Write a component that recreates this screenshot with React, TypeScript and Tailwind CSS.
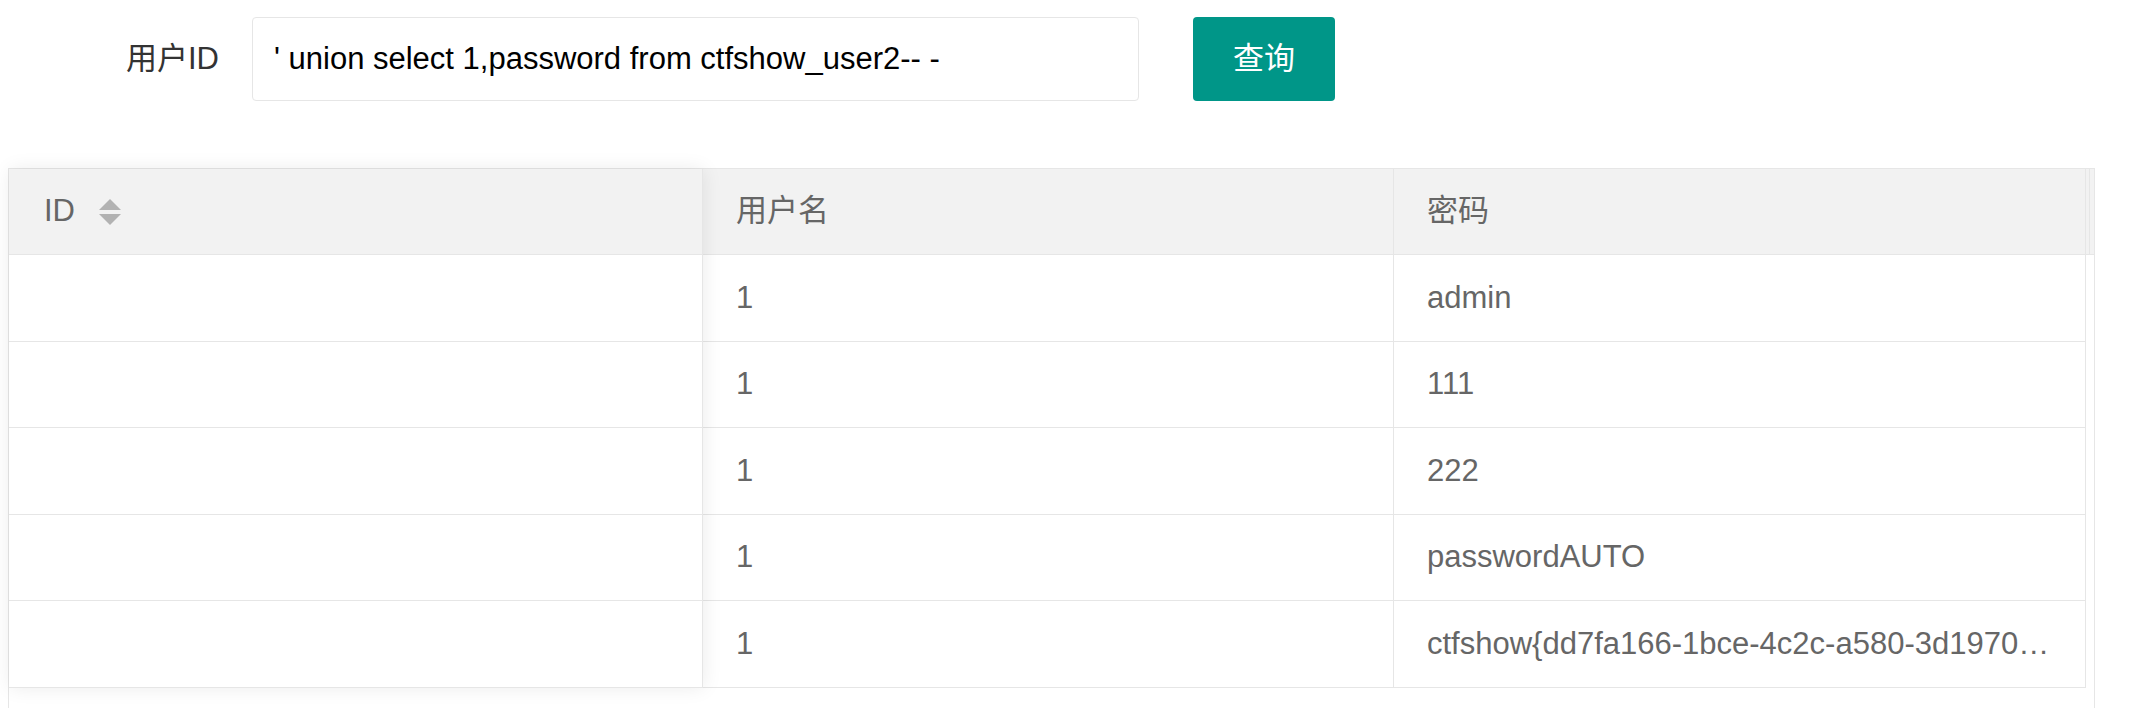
import type { ReactNode } from 'react';

const rows = [
  { name: '1', pass: 'admin' },
  { name: '1', pass: '111' },
  { name: '1', pass: '222' },
  { name: '1', pass: 'passwordAUTO' },
  { name: '1', pass: 'ctfshow{dd7fa166-1bce-4c2c-a580-3d1970…' },
];

function SortIcon() {
  return (
    <svg width="22" height="26" viewBox="0 0 22 26" className="ml-[24px] shrink-0">
      <polygon points="11,0 22,11 0,11" fill="#b2b2b2" />
      <polygon points="0,15 22,15 11,26" fill="#b2b2b2" />
    </svg>
  );
}

function Cell({ children, className = '' }: { children?: ReactNode; className?: string }) {
  return (
    <div className={`flex items-center px-[33px] overflow-hidden whitespace-nowrap ${className}`}>
      <span className="truncate">{children}</span>
    </div>
  );
}

export default function App() {
  return (
    <div
      className="min-h-screen bg-white pt-[17px] text-[31px]"
      style={{ fontFamily: '"Liberation Sans", Arial, "Noto Sans CJK SC", sans-serif' }}
    >
      {/* Search form */}
      <div className="flex items-center pl-[8px]">
        <label className="w-[244px] pr-[33px] text-right text-[#333]">用户ID</label>
        <div className="flex h-[84px] w-[887px] items-center rounded-[4px] border border-[#e6e6e6] bg-white pl-[21px] text-black">
          ' union select 1,password from ctfshow_user2-- -
        </div>
        <button className="ml-[54px] h-[84px] w-[142px] rounded-[4px] bg-[#009688] text-white">查询</button>
      </div>

      {/* Table */}
      <div className="ml-[8px] mt-[67px] w-[2087px] border-x border-t border-[#e6e6e6] text-[#666]">
        <div className="flex">
          {/* fixed left column */}
          <div className="relative z-10 w-[694px] shrink-0 border-r border-[#e6e6e6] bg-white shadow-[1px_0_18px_rgba(0,0,0,0.08)]">
            <div className="flex h-[86px] items-center border-b border-[#e6e6e6] bg-[#f2f2f2] px-[35px]">
              <span>ID</span>
              <SortIcon />
            </div>
            {rows.map((_, i) => (
              <div key={i} className="h-[86.5px] border-b border-[#e6e6e6]" />
            ))}
          </div>

          {/* scrolling part */}
          <div className="flex-1">
            <div className="flex h-[86px] border-b border-[#e6e6e6] bg-[#f2f2f2]">
              <Cell className="w-[691px] border-r border-[#e6e6e6]">用户名</Cell>
              <Cell className="w-[692px] border-r border-[#e6e6e6]">密码</Cell>
              <div className="w-[8px] pl-[3px]">
                <div className="h-full border-l border-[#e6e6e6]" />
              </div>
            </div>
            {rows.map((r, i) => (
              <div key={i} className="flex h-[86.5px]">
                <Cell className="w-[691px] border-b border-r border-[#e6e6e6]">{r.name}</Cell>
                <Cell className="w-[692px] border-b border-r border-[#e6e6e6]">{r.pass}</Cell>
              </div>
            ))}
          </div>
        </div>
        <div className="h-[80px]" />
      </div>
    </div>
  );
}
